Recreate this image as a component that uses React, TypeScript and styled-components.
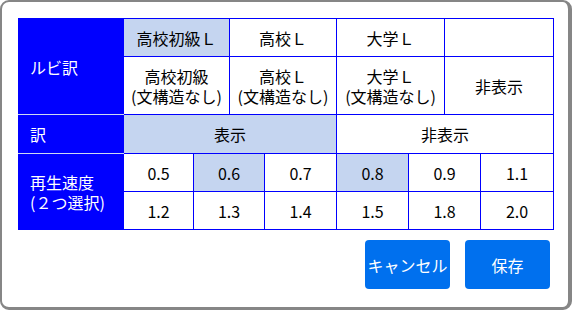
import React from 'react';
import styled, { createGlobalStyle } from 'styled-components';

const GlobalStyle = createGlobalStyle`
  html, body {
    margin: 0;
    padding: 0;
    background: #fff;
  }
  body {
    font-family: "Noto Sans CJK JP", "Noto Sans", sans-serif;
  }
`;

const BLUE = '#0000ff';
const PICKED = '#c5d5f0';

// sub-column widths: the option cells span 3 (ruby) or 2 (speed) of these
const SUB_COLS = [35, 35, 36, 35, 36, 36, 36, 36, 36, 36, 36, 37];

// Layout
const Dialog = styled.div`
  box-sizing: border-box;
  width: 572px;
  height: 310px;
  border: 2px solid #868686;
  border-right-width: 4px;
  border-bottom-width: 3px;
  border-radius: 9px;
  background: #fff;
  padding: 16px 0 0 16px;
  display: flex;
  flex-direction: column;
`;

const Grid = styled.table`
  width: 535px;
  table-layout: fixed;
  border-collapse: collapse;
  font-size: 16px;
  line-height: 20px;
  color: #000;
`;

const HeadCell = styled.th<{ $last?: boolean }>`
  background: ${BLUE};
  color: #fff;
  font-weight: 400;
  text-align: left;
  padding: 0 0 0 11px;
  border: 1px solid ${BLUE};
  border-bottom: 1px solid ${({ $last }) => ($last ? BLUE : '#cdd8f2')};
`;

const Cell = styled.td<{ $picked?: boolean; $h: number }>`
  height: ${({ $h }) => $h - 1}px;
  padding: 0;
  text-align: center;
  vertical-align: middle;
  border: 1px solid ${BLUE};
  background: ${({ $picked }) => ($picked ? PICKED : '#fff')};
`;

const Footer = styled.div`
  display: flex;
  justify-content: flex-end;
  gap: 15px;
  width: 532px;
  margin-top: 10px;
`;

const Button = styled.button`
  width: 85px;
  height: 49px;
  border: none;
  border-radius: 4px;
  background: #0070ee;
  color: #fff;
  font-family: inherit;
  font-size: 16px;
  padding: 0;
  cursor: pointer;
`;

const rubyTop = [
  { label: '高校初級Ｌ', picked: true },
  { label: '高校Ｌ', picked: false },
  { label: '大学Ｌ', picked: false },
  { label: '', picked: false },
];

const rubyBottom = [
  { label: ['高校初級', '(文構造なし)'], picked: false },
  { label: ['高校Ｌ', '(文構造なし)'], picked: false },
  { label: ['大学Ｌ', '(文構造なし)'], picked: false },
  { label: ['非表示'], picked: false },
];

const speeds = [
  [
    { v: '0.5', picked: false },
    { v: '0.6', picked: true },
    { v: '0.7', picked: false },
    { v: '0.8', picked: true },
    { v: '0.9', picked: false },
    { v: '1.1', picked: false },
  ],
  [
    { v: '1.2', picked: false },
    { v: '1.3', picked: false },
    { v: '1.4', picked: false },
    { v: '1.5', picked: false },
    { v: '1.8', picked: false },
    { v: '2.0', picked: false },
  ],
];

export default function App() {
  return (
    <>
      <GlobalStyle />
      <Dialog>
        <Grid>
          <colgroup>
            <col style={{ width: 105 }} />
            {SUB_COLS.map((w, i) => (
              <col key={i} style={{ width: w }} />
            ))}
          </colgroup>
          <tbody>
            <tr>
              <HeadCell rowSpan={2}>ルビ訳</HeadCell>
              {rubyTop.map((r, i) => (
                <Cell key={i} colSpan={3} $h={38} $picked={r.picked}>
                  {r.label}
                </Cell>
              ))}
            </tr>
            <tr>
              {rubyBottom.map((r, i) => (
                <Cell key={i} colSpan={3} $h={58} $picked={r.picked}>
                  {r.label.map((line, j) => (
                    <div key={j}>{line}</div>
                  ))}
                </Cell>
              ))}
            </tr>
            <tr>
              <HeadCell>訳</HeadCell>
              <Cell colSpan={6} $h={39} $picked>
                表示
              </Cell>
              <Cell colSpan={6} $h={39}>
                非表示
              </Cell>
            </tr>
            {speeds.map((row, i) => (
              <tr key={i}>
                {i === 0 && (
                  <HeadCell rowSpan={2} $last>
                    再生速度
                    <br />
                    (２つ選択)
                  </HeadCell>
                )}
                {row.map((s) => (
                  <Cell key={s.v} colSpan={2} $h={38} $picked={s.picked}>
                    {s.v}
                  </Cell>
                ))}
              </tr>
            ))}
          </tbody>
        </Grid>
        <Footer>
          <Button>キャンセル</Button>
          <Button>保存</Button>
        </Footer>
      </Dialog>
    </>
  );
}
